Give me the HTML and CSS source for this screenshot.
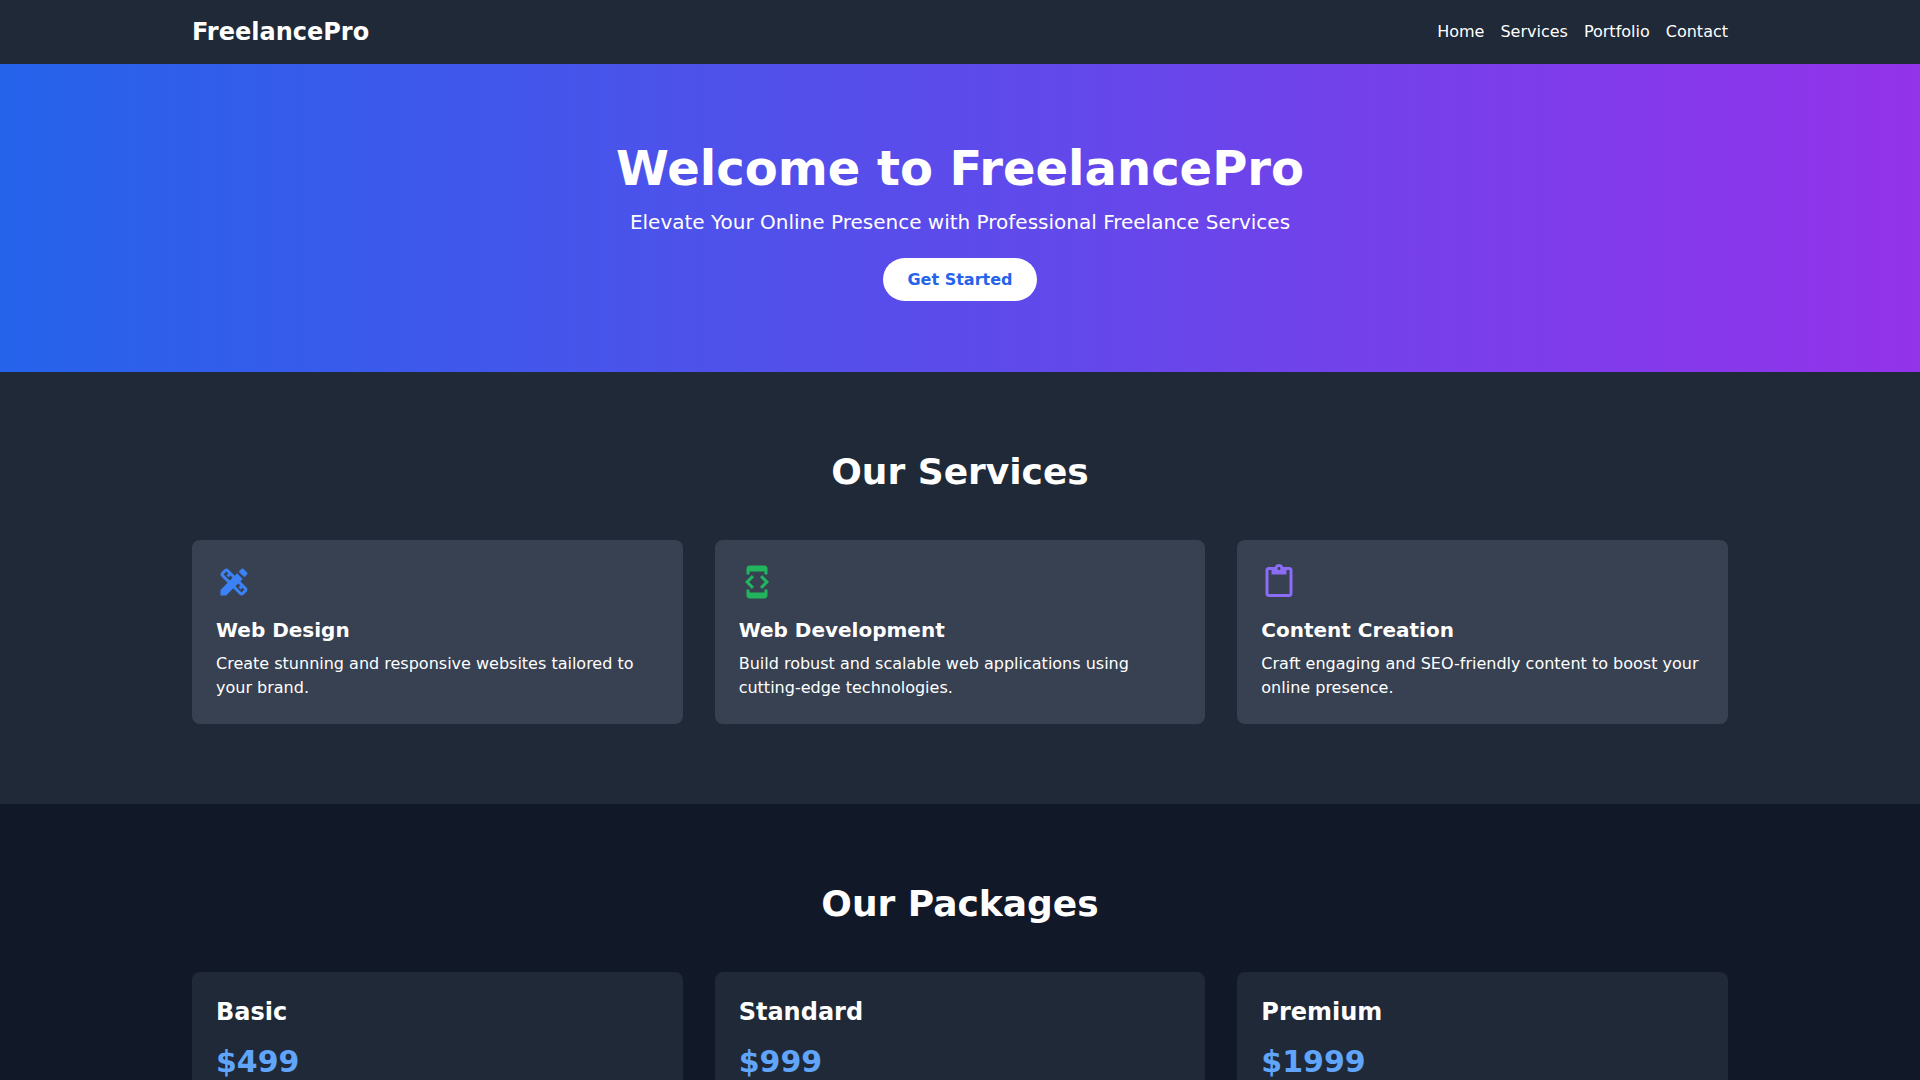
FILE: index.html
```html
<!DOCTYPE html>
<html lang="en">
<head>
<meta charset="utf-8">
<meta name="viewport" content="width=device-width, initial-scale=1">
<title>FreelancePro</title>
<link rel="stylesheet" href="styles.css">
</head>
<body>
<header class="site-header">
  <div class="container header-row">
    <a class="brand" href="#">FreelancePro</a>
    <nav class="nav">
      <a href="#">Home</a>
      <a href="#services">Services</a>
      <a href="#portfolio">Portfolio</a>
      <a href="#contact">Contact</a>
    </nav>
  </div>
</header>
<main>
  <section class="hero">
    <div class="container">
      <h1>Welcome to FreelancePro</h1>
      <p>Elevate Your Online Presence with Professional Freelance Services</p>
      <a class="cta" href="#packages">Get Started</a>
    </div>
  </section>
  <section class="section services" id="services">
    <div class="container">
      <h2>Our Services</h2>
      <div class="grid">
        <article class="card">
          <svg class="icon icon-blue" viewBox="0 0 24 24" aria-hidden="true"><path d="M16.24 11.51l1.57-1.57-3.75-3.75-1.57 1.57-4.14-4.13c-.78-.78-2.05-.78-2.83 0l-1.9 1.9c-.78.78-.78 2.05 0 2.83l4.13 4.13L3 17.25V21h3.75l4.76-4.76 4.13 4.13c.95.95 2.23.6 2.83 0l1.9-1.9c.78-.78.78-2.05 0-2.83l-4.13-4.13zm-7.06-.44L5.04 6.94l1.89-1.9L8.2 6.31 7.02 7.5l1.41 1.41 1.19-1.19 1.45 1.45-1.89 1.9zm7.88 7.89l-4.13-4.13 1.9-1.9 1.45 1.45-1.19 1.19 1.41 1.41 1.19-1.19 1.27 1.27-1.9 1.9zM20.71 7.04c.39-.39.39-1.02 0-1.41l-2.34-2.34c-.47-.47-1.12-.29-1.41 0l-1.83 1.83 3.75 3.75 1.83-1.83z"/></svg>
          <h3>Web Design</h3>
          <p>Create stunning and responsive websites tailored to your brand.</p>
        </article>
        <article class="card">
          <svg class="icon icon-green" viewBox="0 0 24 24" aria-hidden="true"><path d="M7 5h10v2h2V3c0-1.1-.9-1.99-2-1.99L7 1c-1.1 0-2 .9-2 2v4h2V5zm8.41 11.59L20 12l-4.59-4.59L14 8.83 17.17 12 14 15.17l1.41 1.42zM10 15.17L6.83 12 10 8.83 8.59 7.41 4 12l4.59 4.59L10 15.17zM17 19H7v-2H5v4c0 1.1.9 2 2 2h10c1.1 0 2-.9 2-2v-4h-2v2z"/></svg>
          <h3>Web Development</h3>
          <p>Build robust and scalable web applications using cutting-edge technologies.</p>
        </article>
        <article class="card">
          <svg class="icon icon-purple" viewBox="0 0 24 24" aria-hidden="true"><path d="M19 2h-4.18C14.4.84 13.3 0 12 0c-1.3 0-2.4.84-2.82 2H5c-1.1 0-2 .9-2 2v16c0 1.1.9 2 2 2h14c1.1 0 2-.9 2-2V4c0-1.1-.9-2-2-2zm-7 0c.55 0 1 .45 1 1s-.45 1-1 1-1-.45-1-1 .45-1 1-1zm7 18H5V4h2v3h10V4h2v16z"/></svg>
          <h3>Content Creation</h3>
          <p>Craft engaging and SEO-friendly content to boost your online presence.</p>
        </article>
      </div>
    </div>
  </section>
  <section class="section" id="packages">
    <div class="container">
      <h2>Our Packages</h2>
      <div class="grid">
        <article class="card package"><h3>Basic</h3><p class="price">$499</p></article>
        <article class="card package"><h3>Standard</h3><p class="price">$999</p></article>
        <article class="card package"><h3>Premium</h3><p class="price">$1999</p></article>
      </div>
    </div>
  </section>
</main>
</body>
</html>
```
FILE: styles.css
```css
* { box-sizing: border-box; margin: 0; padding: 0; }
body {
  background: #111827;
  color: #fff;
  font-family: "DejaVu Sans", sans-serif;
  font-size: 16px;
  line-height: 24px;
}
a { color: inherit; text-decoration: none; }
.container { width: 80%; max-width: 1536px; margin: 0 auto; }

.site-header { background: #1f2937; padding: 16px 0; }
.header-row { display: flex; justify-content: space-between; align-items: center; }
.brand { font-size: 24px; line-height: 32px; font-weight: 700; }
.nav { display: flex; gap: 16px; }

.hero {
  background: linear-gradient(to right, #2563eb, #9333ea);
  padding: 80px 0;
  text-align: center;
}
.hero h1 { font-size: 48px; line-height: 48px; margin-bottom: 16px; }
.hero p { font-size: 20px; line-height: 28px; margin-bottom: 32px; }
.cta {
  background: #fff;
  color: #2563eb;
  font-weight: 700;
  padding: 12px 24px;
  border-radius: 9999px;
}

.section { padding: 80px 0; }
.section h2 { font-size: 36px; line-height: 40px; margin-bottom: 48px; text-align: center; }
.services { background: #1f2937; }
.grid { display: grid; grid-template-columns: repeat(3, 1fr); gap: 32px; }
.card { background: #374151; border-radius: 8px; padding: 24px; }
.card h3 { font-size: 20px; line-height: 28px; margin-bottom: 8px; }
.icon { display: block; width: 36px; height: 36px; margin-bottom: 16px; fill: currentColor; }
.icon-blue { color: #3b82f6; }
.icon-green { color: #22b55e; }
.icon-purple { color: #8b6cf6; }

.package { background: #1f2937; }
.package h3 { font-size: 24px; line-height: 32px; margin-bottom: 16px; }
.price { color: #60a5fa; font-size: 30px; line-height: 36px; font-weight: 700; }
```
